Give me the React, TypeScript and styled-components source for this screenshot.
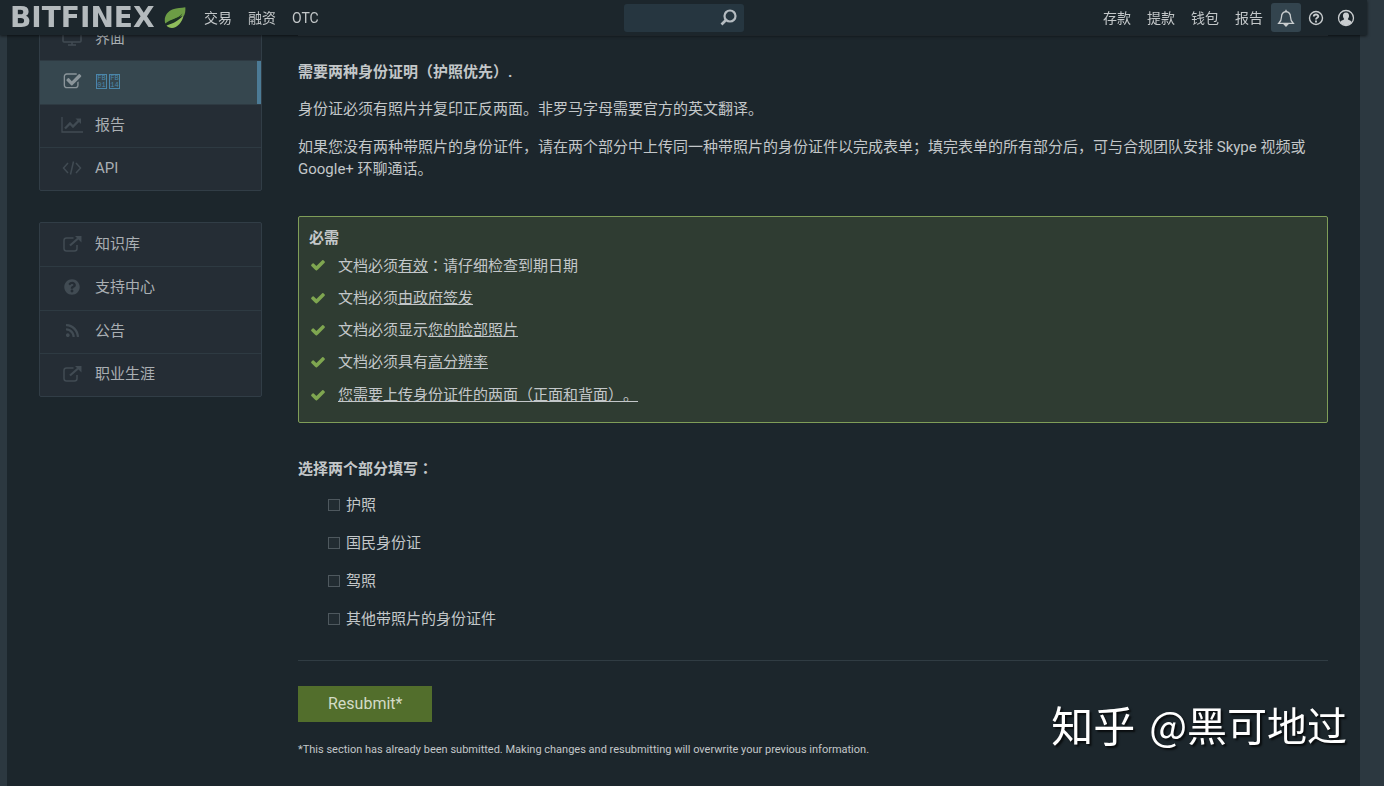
import React from "react";
import styled, { createGlobalStyle } from "styled-components";
import { FaQuestionCircle, FaRss } from "react-icons/fa";

const sans = `Roboto, "Noto Sans CJK SC", sans-serif`;

const GlobalStyle = createGlobalStyle`
  *, *::before, *::after { box-sizing: border-box; }
  body {
    margin: 0;
    background: #2c3840;
    color: #c3c7c9;
    font: 15px/22px ${sans};
    text-spacing-trim: space-all;
  }
  a { color: inherit; text-decoration: none; }
`;

const Header = styled.header`
  position: fixed;
  top: 0;
  left: 0;
  right: 17px;
  z-index: 2;
  display: grid;
  grid-template-columns: 1fr 120px 1fr;
  align-items: center;
  height: 35px;
  padding: 0 6px;
  background: #1c262c;
  box-shadow: 0 1px 3px rgba(0, 0, 0, 0.6);
  font-size: 14px;
`;

const HeaderSide = styled.div<{ $end?: boolean }>`
  display: flex;
  align-items: center;
  justify-content: ${(p) => (p.$end ? "flex-end" : "flex-start")};
`;

const Logo = styled.a`
  display: flex;
  align-items: center;
  justify-content: space-between;
  width: 180px;
  margin-right: 10px;
  padding-left: 4px;
  color: #b4babd;
  font: bold 28px/34px "DejaVu Sans", sans-serif;
`;

const NavLink = styled.a`
  padding: 0 8px;
`;

const IconButton = styled.button<{ $active?: boolean }>`
  display: flex;
  align-items: center;
  justify-content: center;
  width: 30px;
  height: 29px;
  margin: 0;
  padding: 0;
  border: 0;
  border-radius: 3px;
  background: ${(p) => (p.$active ? "#33444e" : "transparent")};
  color: #c9cdcf;
`;

const SearchBox = styled.label`
  display: flex;
  align-items: center;
  height: 28px;
  padding-right: 7px;
  border-radius: 3px;
  background: #263640;
`;

const SearchInput = styled.input`
  flex: 1;
  min-width: 0;
  border: 0;
  padding: 0 8px;
  background: transparent;
  color: inherit;
  font: inherit;
  outline: 0;
`;

const Page = styled.div`
  display: flex;
  align-items: flex-start;
  gap: 36px;
  min-height: 100vh;
  margin: 0 24px 0 7px;
  padding: 16px 32px 0;
  background: #1c262c;
`;

const Sidebar = styled.nav`
  flex: 0 0 223px;
  display: grid;
  gap: 31px;
`;

const Menu = styled.ul`
  display: grid;
  grid-auto-rows: 1fr;
  height: 175px;
  margin: 0;
  padding: 0;
  list-style: none;
  border: 1px solid #313d46;
  border-radius: 2px;
  background: #252d35;
`;

const MenuItem = styled.li`
  display: grid;
  & + & { border-top: 1px solid #2e3a42; }
`;

const MenuLink = styled.a<{ $active?: boolean }>`
  display: flex;
  align-items: center;
  gap: 12px;
  padding: 0 0 2px 21px;
  border-right: ${(p) => (p.$active ? "4px solid #4c7b96" : "0")};
  background: ${(p) => (p.$active ? "#36474f" : "transparent")};
  color: ${(p) => (p.$active ? "#4b86aa" : "#aaafb3")};
`;

const MenuIcon = styled.span<{ $active?: boolean }>`
  display: flex;
  justify-content: center;
  width: 22px;
  color: ${(p) => (p.$active ? "#8b959a" : "#414b53")};
`;

const GlyphRow = styled.span`
  display: flex;
  gap: 2px;
  padding-left: 1px;
`;

const GlyphBox = styled.span`
  display: grid;
  justify-items: center;
  width: 11px;
  height: 15px;
  border: 1px solid currentColor;
  font: 7px/7px "Liberation Mono", monospace;
`;

const Content = styled.main`
  flex: 1;
  min-width: 0;
  padding-top: 19px;
`;

const Rule = styled.hr`
  height: 1px;
  margin: 0;
  border: 0;
  background: #303c43;
`;

const Intro = styled.section`
  margin-top: 25px;
`;

const Paragraph = styled.p`
  margin: 0 0 16px;
`;

const Title = styled.h3`
  margin: 0 0 15px;
  font-size: 15px;
  line-height: 22px;
`;

const Colon = styled.span`
  font-family: "Noto Sans CJK TC", sans-serif;
`;

const Notice = styled.section`
  margin-top: 36px;
  padding: 10px 10px 11px;
  border: 1px solid #7f9d58;
  border-radius: 2px;
  background: #2f3c32;
`;

const NoticeTitle = styled.h3`
  margin: 0;
  font-size: 15px;
  line-height: 22px;
`;

const Checks = styled.ul`
  display: grid;
  grid-auto-rows: 1fr;
  height: 162px;
  margin: 0;
  padding: 0;
  list-style: none;
`;

const Check = styled.li`
  display: flex;
  align-items: center;
  gap: 12px;
  padding-left: 1px;
  svg { color: #7fa650; }
`;

const Form = styled.form`
  margin-top: 34px;
`;

const Options = styled.fieldset`
  margin: 0 0 22px;
  padding: 0;
  border: 0;
`;

const Legend = styled.legend`
  margin-bottom: 6px;
  padding: 0;
  font-weight: bold;
`;

const Option = styled.label`
  display: flex;
  align-items: center;
  gap: 6px;
  height: 38px;
  padding-left: 30px;
`;

const Tick = styled.input`
  appearance: none;
  width: 12px;
  height: 12px;
  margin: 0;
  border: 1px solid #4e585e;
  background: #222c32;
  &:checked { background: #7fa650; }
`;

const Submit = styled.button`
  display: block;
  height: 36px;
  margin: 25px 0 17px;
  padding: 0 30px;
  border: 0;
  background: #526e2c;
  color: #d3dbc6;
  font: 16px/36px ${sans};
`;

const Footnote = styled.p`
  margin: 0;
  font-size: 11px;
`;

const Signature = styled.div`
  position: fixed;
  right: 37px;
  bottom: 32px;
  display: flex;
  gap: 14px;
  color: #fff;
  font: 40px/60px "Noto Sans CJK SC", sans-serif;
  text-shadow: 2px 2px 2px rgba(0, 0, 0, 0.7);
`;

const SiteName = styled.span`
  font-size: 42px;
`;

const Leaf = () => (
  <svg width="22" height="22" viewBox="0 0 22 22">
    <path d="M1.200 16.500C-0.500 10 3 4.500 9 2.300C13 1 17 1.200 21.300 0.300C21.600 3.500 21.300 6 20.300 8.300C16 10.500 7 12 1.200 16.500Z" fill="#6c9c45" />
    <path d="M2.500 18.500C6 17.500 14 15 19.800 7.800C18.500 15.500 13 21 8 21C5.500 21 3.500 20 2.500 18.500Z" fill="#8fbc5b" />
    <path d="M1.200 17.500C8 16.500 15 13 18.500 6.500C14 11.500 7 12.500 1.200 17.500Z" fill="#1b3420" />
  </svg>
);

const Magnifier = () => (
  <svg width="17" height="17" viewBox="0 0 17 17" fill="none" stroke="#b5bcc1">
    <circle cx="10" cy="7" r="5.500" strokeWidth="2.200" />
    <path d="M6 11L1.500 15.500" strokeWidth="2.600" />
  </svg>
);

const Bell = () => (
  <svg width="18" height="18" viewBox="0 0 18 18" fill="none" stroke="currentColor" strokeWidth="1.300">
    <path d="M9 2.500C5.500 3 4.500 5.500 4.500 8C4.500 11 3.500 12.500 1.800 14.300H16.200C14.500 12.500 13.500 11 13.500 8C13.500 5.500 12.500 3 9 2.500Z" />
    <path d="M9 0.800V2.500" />
    <path d="M7 15H11L9 17Z" fill="currentColor" />
  </svg>
);

const Help = () => (
  <svg width="16" height="16" viewBox="0 0 16 16" fill="none" stroke="currentColor">
    <circle cx="8" cy="8" r="6.500" strokeWidth="1.400" />
    <path d="M5.800 6.500C5.800 3.800 10.300 3.900 10.300 6.300C10.300 7.800 8 7.800 8 9.400" strokeWidth="1.900" />
    <path d="M8 10.600V12.400" strokeWidth="1.900" />
  </svg>
);

const User = () => (
  <svg width="18" height="18" viewBox="0 0 18 18">
    <circle cx="9" cy="9" r="7.500" fill="none" stroke="currentColor" strokeWidth="1.300" />
    <path d="M9 3.500C11.500 3.500 12.300 5.300 12 7.500C11.800 8.800 11.200 9.500 10.800 10C11 11 14 11.200 14.800 13.200C12 17.200 6 17.200 3.200 13.200C4 11.200 7 11 7.200 10C6.800 9.500 6.200 8.800 6 7.500C5.700 5.300 6.500 3.500 9 3.500Z" fill="currentColor" />
  </svg>
);

const Monitor = () => (
  <svg width="20" height="17" viewBox="0 0 20 17" fill="none" stroke="currentColor" strokeWidth="1.500">
    <rect x="1" y="1" width="18" height="12" rx="1" />
    <path d="M6 16H14M10 13V16" />
  </svg>
);

const CheckMark = () => (
  <svg width="16" height="16" viewBox="0 0 1792 1792" fill="currentColor">
    <path d="M1671 566q0 40-28 68l-724 724-136 136q-28 28-68 28t-68-28l-136-136-362-362q-28-28-28-68t28-68l136-136q28-28 68-28t68 28l294 295 656-657q28-28 68-28t68 28l136 136q28 28 28 68z" />
  </svg>
);

const CheckSquare = () => (
  <svg width="19" height="19" viewBox="0 0 1792 1792" fill="currentColor">
    <path d="M1472 930v318q0 119-84.500 203.500t-203.500 84.500h-832q-119 0-203.500-84.500t-84.500-203.500v-832q0-119 84.500-203.500t203.500-84.500h832q63 0 117 25 15 7 18 23 3 17-9 29l-49 49q-10 10-23 10-3 0-9-2-23-6-45-6h-832q-66 0-113 47t-47 113v832q0 66 47 113t113 47h832q66 0 113-47t47-113v-254q0-13 9-22l64-64q10-10 23-10 6 0 12 3 20 8 20 29zm231-489l-814 814q-24 24-57 24t-57-24l-430-430q-24-24-24-57t24-57l110-110q24-24 57-24t57 24l263 263 647-647q24-24 57-24t57 24l110 110q24 24 24 57t-24 57z" />
  </svg>
);

const Chart = () => (
  <svg width="22" height="16" viewBox="0 0 22 16" fill="none" stroke="currentColor">
    <path d="M1 0V15H22" strokeWidth="1.300" />
    <path d="M4 11.500L9 6.500L12 9.500L18 3.500" strokeWidth="2.300" />
    <path d="M14.500 1.500H20V7Z" fill="currentColor" stroke="none" />
  </svg>
);

const Code = () => (
  <svg width="20" height="14" viewBox="0 0 20 14" fill="none" stroke="currentColor" strokeWidth="1.500">
    <path d="M6 2L1.500 7L6 12M14 2L18.500 7L14 12M11.500 0.500L8.500 13.500" />
  </svg>
);

const External = () => (
  <svg width="19" height="16" viewBox="0 0 19 16" fill="none" stroke="currentColor">
    <path d="M10.500 2H3.500Q1 2 1 4.500V12.500Q1 15 3.500 15H11.500Q14 15 14 12.500V9" strokeWidth="1.500" />
    <path d="M7 9.500L15 2.500" strokeWidth="2.200" />
    <path d="M12 0H18.500V6.500Z" fill="currentColor" stroke="none" />
  </svg>
);

type Entry = { id: string; label: React.ReactNode; icon: React.ReactNode; active?: boolean };

const MissingGlyphs = () => (
  <GlyphRow>
    <GlyphBox><span>FB</span><span>01</span></GlyphBox>
    <GlyphBox><span>FB</span><span>14</span></GlyphBox>
  </GlyphRow>
);

const account: Entry[] = [
  { id: "interface", label: "界面", icon: <Monitor /> },
  { id: "verify", label: <MissingGlyphs />, icon: <CheckSquare />, active: true },
  { id: "reports", label: "报告", icon: <Chart /> },
  { id: "api", label: "API", icon: <Code /> },
];

const resources: Entry[] = [
  { id: "knowledge", label: "知识库", icon: <External /> },
  { id: "support", label: "支持中心", icon: <FaQuestionCircle size={16} /> },
  { id: "news", label: "公告", icon: <FaRss size={15} /> },
  { id: "careers", label: "职业生涯", icon: <External /> },
];

const checks: { id: string; text: React.ReactNode }[] = [
  { id: "valid", text: <>文档必须<u>有效</u><Colon>：</Colon>请仔细检查到期日期</> },
  { id: "issued", text: <>文档必须<u>由政府签发</u></> },
  { id: "photo", text: <>文档必须显示<u>您的脸部照片</u></> },
  { id: "quality", text: <>文档必须具有<u>高分辨率</u></> },
  { id: "sides", text: <u>您需要上传身份证件的两面（正面和背面）。</u> },
];

const documents = ["护照", "国民身份证", "驾照", "其他带照片的身份证件"];

const MenuList = ({ entries }: { entries: Entry[] }) => (
  <Menu>
    {entries.map((e) => (
      <MenuItem key={e.id}>
        <MenuLink href="#" $active={e.active}>
          <MenuIcon $active={e.active}>{e.icon}</MenuIcon>
          {e.label}
        </MenuLink>
      </MenuItem>
    ))}
  </Menu>
);

export default function App() {
  return (
    <>
      <GlobalStyle />
      <Header>
        <HeaderSide>
          <Logo href="#">BITFINEX<Leaf /></Logo>
          {["交易", "融资", "OTC"].map((t) => <NavLink href="#" key={t}>{t}</NavLink>)}
        </HeaderSide>
        <SearchBox>
          <SearchInput type="text" aria-label="Search" />
          <Magnifier />
        </SearchBox>
        <HeaderSide $end>
          {["存款", "提款", "钱包", "报告"].map((t) => <NavLink href="#" key={t}>{t}</NavLink>)}
          <IconButton $active aria-label="Notifications"><Bell /></IconButton>
          <IconButton aria-label="Help"><Help /></IconButton>
          <IconButton aria-label="Account"><User /></IconButton>
        </HeaderSide>
      </Header>
      <Page>
        <Sidebar>
          <MenuList entries={account} />
          <MenuList entries={resources} />
        </Sidebar>
        <Content>
          <Rule />
          <Intro>
            <Title>需要两种身份证明（护照优先）.</Title>
            <Paragraph>身份证必须有照片并复印正反两面。非罗马字母需要官方的英文翻译。</Paragraph>
            <Paragraph>
              如果您没有两种带照片的身份证件，请在两个部分中上传同一种带照片的身份证件以完成表单；填完表单的所有部分后，可与合规团队安排 Skype 视频或 Google+ 环聊通话。
            </Paragraph>
          </Intro>
          <Notice>
            <NoticeTitle>必需</NoticeTitle>
            <Checks>
              {checks.map((c) => (
                <Check key={c.id}>
                  <CheckMark />
                  <span>{c.text}</span>
                </Check>
              ))}
            </Checks>
          </Notice>
          <Form onSubmit={(e) => e.preventDefault()}>
            <Options>
              <Legend>选择两个部分填写<Colon>：</Colon></Legend>
              {documents.map((d) => (
                <Option key={d}><Tick type="checkbox" />{d}</Option>
              ))}
            </Options>
            <Rule />
            <Submit type="submit">Resubmit*</Submit>
            <Footnote>
              *This section has already been submitted. Making changes and resubmitting will overwrite your previous information.
            </Footnote>
          </Form>
        </Content>
      </Page>
      <Signature><SiteName>知乎</SiteName><span>@黑可地过</span></Signature>
    </>
  );
}
